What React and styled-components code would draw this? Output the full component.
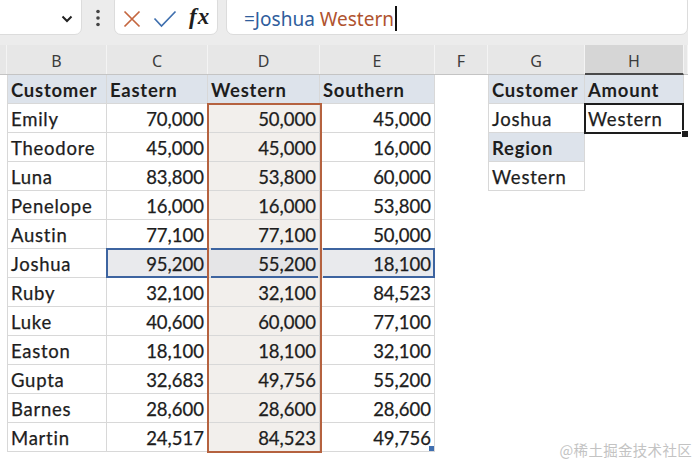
import React from 'react';
import styled, { createGlobalStyle } from 'styled-components';

const Global = createGlobalStyle`
  html, body { margin: 0; padding: 0; background: #fff; }
  #root { width: 700px; height: 463px; }
`;

const COLS = '7px 100px 101px 112px 115px 53px 97px 99px';
const HEAD_BG = '#dde3eb';
const LINE = '#d8d8d8';

const Page = styled.div`
  position: relative;
  width: 700px;
  height: 463px;
  overflow: hidden;
  background: #fff;
  font-family: Lato, "Liberation Sans", sans-serif;
`;

const Chrome = styled.div`
  width: 688px;
  background: #ececec;
  display: flex;
  flex-direction: column;
`;

const FormulaBar = styled.div`
  height: 36px;
  display: flex;
  align-items: flex-end;
  overflow: hidden;
  padding-bottom: 1px;
  box-sizing: border-box;
`;

const Box = styled.div`
  height: 41px;
  box-sizing: border-box;
  background: #fff;
  border: 1px solid #dcdcdc;
  border-radius: 7px;
  display: flex;
  align-items: center;
  padding-top: 8px;
`;

const NameBox = styled(Box)`
  width: 92px;
  margin-left: -10px;
  justify-content: flex-end;
  padding-right: 8px;
`;

const Dots = styled.div`
  width: 32px;
  height: 35px;
  display: flex;
  align-items: center;
  justify-content: center;
`;

const ActionBox = styled(Box)`
  width: 104px;
  padding-left: 8px;
  gap: 12px;
`;

const Fx = styled.span`
  font-family: "Liberation Serif", serif;
  font-style: italic;
  font-weight: 700;
  font-size: 23px;
  color: #1e1e1e;
  letter-spacing: 1px;
  margin-top: -3px;
`;

const FormulaInput = styled(Box)`
  flex: 1;
  margin-left: 8px;
  padding-left: 17px;
  font-family: "Noto Sans", "Open Sans", sans-serif;
  font-size: 19px;
`;

const Ref = styled.span`
  color: ${p => p.$color};
  white-space: pre;
`;

const Caret = styled.span`
  display: inline-block;
  width: 2px;
  height: 25px;
  background: #111;
  margin-left: 1px;
`;

const Band = styled.div`
  height: 9px;
`;

const ColHeaders = styled.div`
  display: grid;
  grid-template-columns: ${COLS} 1fr;
  height: 30px;
  background: #e7e7e7;
  border-bottom: 1px solid #c4c4c4;
  box-sizing: border-box;
`;

const ColHead = styled.div`
  display: flex;
  align-items: center;
  justify-content: center;
  font-family: "Noto Sans", "Open Sans", sans-serif;
  font-size: 16px;
  color: #3c3c3c;
  border-right: 1px solid #f4f4f4;
  box-sizing: border-box;
  background: ${p => (p.$active ? '#d6d6d6' : 'transparent')};
  border-bottom: ${p => (p.$active ? '2px solid #4a4a4a' : 'none')};
  margin-bottom: ${p => (p.$active ? '-1px' : '0')};
  padding-top: 3px;
`;

const Sheet = styled.div`
  display: grid;
  grid-template-columns: ${COLS};
  grid-auto-rows: 29px;
`;

const Cell = styled.div`
  grid-row: ${p => p.$r};
  grid-column: ${p => p.$c};
  box-sizing: border-box;
  display: flex;
  justify-content: ${p => (p.$num ? 'flex-end' : 'flex-start')};
  padding: 3px 3px 0 3px;
  line-height: 25px;
  font-size: 18.5px;
  letter-spacing: ${p => (p.$num ? '0' : '0.75px')};
  font-weight: ${p => (p.$head ? 700 : 400)};
  -webkit-text-stroke: ${p => (p.$head ? '0' : '0.25px')};
  color: #1d1d1d;
  background: ${p => p.$bg || '#fff'};
  border-right: 1px solid ${LINE};
  border-bottom: 1px solid ${LINE};
  border-left: ${p => (p.$first ? `1px solid ${LINE}` : 'none')};
  white-space: nowrap;
`;

const Range = styled.div`
  grid-row: ${p => p.$r};
  grid-column: ${p => p.$c};
  z-index: ${p => p.$z || 2};
  pointer-events: none;
  box-sizing: border-box;
  margin: ${p => p.$m};
  border-style: solid;
  border-color: ${p => p.$color};
  border-width: ${p => p.$w};
`;

const Handle = styled.div`
  grid-row: ${p => p.$r};
  grid-column: ${p => p.$c};
  z-index: 4;
  align-self: end;
  justify-self: end;
  width: ${p => p.$size}px;
  height: ${p => p.$size}px;
  background: ${p => p.$color};
  margin: ${p => p.$m};
  outline: ${p => (p.$ring ? '1px solid #fff' : 'none')};
`;

const Watermark = styled.div`
  position: absolute;
  right: 8px;
  bottom: 3px;
  font-family: "Noto Sans CJK SC", sans-serif;
  font-size: 14.5px;
  color: #c3c3c3;
  letter-spacing: 0.3px;
`;

const rows = [
  ['Emily', '70,000', '50,000', '45,000'],
  ['Theodore', '45,000', '45,000', '16,000'],
  ['Luna', '83,800', '53,800', '60,000'],
  ['Penelope', '16,000', '16,000', '53,800'],
  ['Austin', '77,100', '77,100', '50,000'],
  ['Joshua', '95,200', '55,200', '18,100'],
  ['Ruby', '32,100', '32,100', '84,523'],
  ['Luke', '40,600', '60,000', '77,100'],
  ['Easton', '18,100', '18,100', '32,100'],
  ['Gupta', '32,683', '49,756', '55,200'],
  ['Barnes', '28,600', '28,600', '28,600'],
  ['Martin', '24,517', '84,523', '49,756'],
];

const WEST_BG = '#f2efec';
const JOSH_BG = '#e9eaed';
const JOSH_WEST_BG = '#e5e5e7';

function cellBg(name, col) {
  const josh = name === 'Joshua';
  if (col === 4) return josh ? JOSH_WEST_BG : WEST_BG;
  if (josh && (col === 3 || col === 5)) return JOSH_BG;
  return '#fff';
}

const XIcon = () => (
  <svg width="18" height="18" viewBox="0 0 18 18">
    <path d="M1.5 1.5 L16.5 16.5 M16.5 1.5 L1.5 16.5" stroke="#c4663f" strokeWidth="1.7" fill="none" />
  </svg>
);

const CheckIcon = () => (
  <svg width="24" height="18" viewBox="0 0 24 18">
    <path d="M1.5 8.5 L8.5 16 L22.5 1.5" stroke="#3f6fae" strokeWidth="1.7" fill="none" />
  </svg>
);

const Chevron = () => (
  <svg width="12" height="8" viewBox="0 0 12 8">
    <path d="M1.5 1.5 L6 6 L10.5 1.5" stroke="#222" strokeWidth="2" fill="none" />
  </svg>
);

const VDots = () => (
  <svg width="6" height="18" viewBox="0 0 6 18">
    <circle cx="3" cy="2.5" r="1.8" fill="#444" />
    <circle cx="3" cy="9" r="1.8" fill="#444" />
    <circle cx="3" cy="15.5" r="1.8" fill="#444" />
  </svg>
);

export default function App() {
  const letters = ['', 'B', 'C', 'D', 'E', 'F', 'G', 'H', ''];
  return (
    <Page>
      <Global />
      <Chrome>
        <FormulaBar>
          <NameBox>
            <Chevron />
          </NameBox>
          <Dots>
            <VDots />
          </Dots>
          <ActionBox>
            <XIcon />
            <CheckIcon />
            <Fx>fx</Fx>
          </ActionBox>
          <FormulaInput>
            <Ref $color="#2f5d9c">=Joshua </Ref>
            <Ref $color="#b0532f">Western</Ref>
            <Caret />
          </FormulaInput>
        </FormulaBar>
        <Band />
        <ColHeaders>
          {letters.map((l, i) => (
            <ColHead key={i} $active={l === 'H'}>
              {l}
            </ColHead>
          ))}
        </ColHeaders>
      </Chrome>
      <Sheet>
        {['Customer', 'Eastern', 'Western', 'Southern'].map((h, i) => (
          <Cell key={h} $r={1} $c={i + 2} $head $first={i === 0} $bg={HEAD_BG}>
            {h}
          </Cell>
        ))}
        {rows.map((row, ri) =>
          row.map((v, ci) => (
            <Cell
              key={`${ri}-${ci}`}
              $r={ri + 2}
              $c={ci + 2}
              $num={ci > 0}
              $first={ci === 0}
              $bg={cellBg(row[0], ci + 2)}
            >
              {v}
            </Cell>
          ))
        )}
        <Cell $r={1} $c={7} $head $first $bg={HEAD_BG}>Customer</Cell>
        <Cell $r={1} $c={8} $head $bg={HEAD_BG}>Amount</Cell>
        <Cell $r={2} $c={7} $first>Joshua</Cell>
        <Cell $r={2} $c={8}>Western</Cell>
        <Cell $r={3} $c={7} $head $first $bg={HEAD_BG}>Region</Cell>
        <Cell $r={4} $c={7} $first>Western</Cell>

        <Range $r="7" $c="3" $color="#3d64a0" $w="2px 0 2px 2px" $m="-1px 0 0 -1px" $z={2} />
        <Range $r="7" $c="4" $color="#3d64a0" $w="2px 0 2px 0" $m="-1px 2px 0 3px" $z={2} />
        <Range $r="7" $c="5" $color="#3d64a0" $w="2px 2px 2px 0" $m="-1px 0 0 3px" $z={2} />
        <Range $r="2 / 14" $c="4" $color="#b5623f" $w="2px" $m="-1px -2px -1px -1px" $z={3} />
        <Range $r="2" $c="8" $color="#1d1d1d" $w="2px" $m="-1px 0 -1px -1px" $z={3} />
        <Handle $r="2" $c="8" $size={6} $color="#1d1d1d" $m="0 -4px -4px 0" $ring />
        <Handle $r="13" $c="5" $size={5} $color="#3f6fb0" $m="0 1px 1px 0" />
      </Sheet>
      <Watermark>@稀土掘金技术社区</Watermark>
    </Page>
  );
}
